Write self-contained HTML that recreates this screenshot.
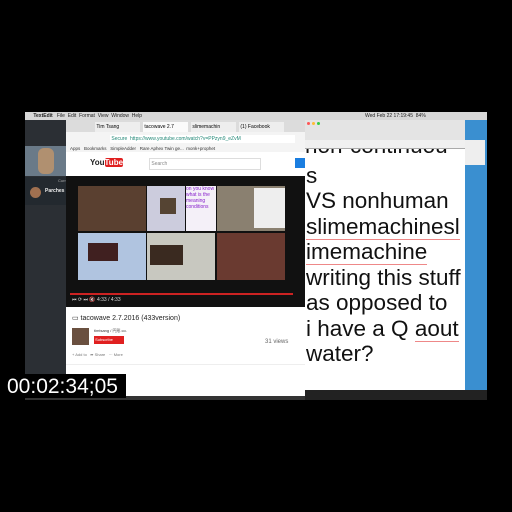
<!DOCTYPE html><html><head><style>
body{margin:0;width:512px;height:512px;background:#000;position:relative;overflow:hidden;font-family:"Liberation Sans",sans-serif}
div{position:absolute}
.t{font-size:22.5px;color:#111;left:306px;white-space:nowrap;line-height:26px}
.u{border-bottom:1px solid #e88}
</style></head><body>
<div style="left:25px;top:112px;width:462px;height:288px;background:#3a8fd0"></div>
<div style="left:25px;top:112px;width:462px;height:8px;background:#d8d8d8;font-size:5px;color:#222;line-height:8px">&nbsp;&nbsp;&nbsp;&nbsp;&nbsp;&nbsp;<b>TextEdit</b>&nbsp;&nbsp; File&nbsp; Edit&nbsp; Format&nbsp; View&nbsp; Window&nbsp; Help<span style="position:absolute;left:340px">Wed Feb 22 17:19:45 &nbsp;84%</span></div>
<div style="left:25px;top:120px;width:42px;height:280px;background:#2b2f34"></div>
<div style="left:25px;top:146px;width:42px;height:30px;background:#6a7a88"></div>
<div style="left:38px;top:148px;width:16px;height:26px;background:#b09070;border-radius:6px"></div>
<div style="left:25px;top:177px;width:93px;height:28px;background:#23292f"></div>
<div style="left:58px;top:178px;font-size:4px;color:#aaa">Current Call</div>
<div style="left:30px;top:187px;width:11px;height:11px;border-radius:50%;background:#a07050"></div>
<div style="left:45px;top:188px;font-size:5px;color:#eee"><b>Parches</b></div>
<div style="left:86px;top:187px;width:11px;height:11px;border-radius:50%;background:#2aa0e0"></div>
<div style="left:102px;top:187px;width:11px;height:11px;border-radius:50%;background:#e02828"></div>
<div style="left:66px;top:120px;width:240px;height:12px;background:#dcdcdc"></div>
<div style="left:95px;top:122px;width:45px;height:10px;background:#eee;font-size:5px;line-height:10px">&nbsp;Tim Tsang</div>
<div style="left:143px;top:122px;width:45px;height:10px;background:#fafafa;font-size:5px;line-height:10px">&nbsp;tacowave 2.7</div>
<div style="left:191px;top:122px;width:45px;height:10px;background:#eee;font-size:5px;line-height:10px">&nbsp;slimemachin</div>
<div style="left:239px;top:122px;width:45px;height:10px;background:#eee;font-size:5px;line-height:10px">&nbsp;(1) Facebook</div>
<div style="left:66px;top:132px;width:240px;height:20px;background:#f4f4f4"></div>
<div style="left:110px;top:135px;width:185px;height:8px;background:#fff;font-size:5px;color:#287;line-height:8px">&nbsp;Secure&nbsp; https://www.youtube.com/watch?v=PPzyn9_eZvM</div>
<div style="left:70px;top:146px;font-size:4.5px;color:#333">Apps &nbsp; Bookmarks &nbsp; SimpleAdder &nbsp; Rare Aphex Twin ge... &nbsp;monk+prophet</div>
<div style="left:66px;top:152px;width:240px;height:24px;background:#fff"></div>
<div style="left:90px;top:158px;font-size:8px;font-weight:bold;color:#222">You<span style="background:#e02020;color:#fff;border-radius:2px">Tube</span></div>
<div style="left:149px;top:158px;width:110px;height:10px;border:1px solid #ddd;font-size:5px;color:#888;line-height:10px">&nbsp;Search</div>
<div style="left:295px;top:158px;width:11px;height:10px;background:#1a7ee0"></div>
<div style="left:66px;top:176px;width:240px;height:131px;background:#111"></div>
<div style="left:78px;top:186px;width:68px;height:45px;background:#5a4030"></div>
<div style="left:147px;top:186px;width:38px;height:45px;background:#ccd"></div>
<div style="left:160px;top:198px;width:16px;height:16px;background:#543"></div>
<div style="left:186px;top:186px;width:30px;height:45px;background:#f4f0f8;font-size:5px;color:#82c;line-height:6px">on you know what is the meaning conditions</div>
<div style="left:217px;top:186px;width:68px;height:45px;background:#8a8070"></div>
<div style="left:254px;top:188px;width:31px;height:40px;background:#eee"></div>
<div style="left:78px;top:233px;width:68px;height:47px;background:#b0c4e0"></div>
<div style="left:88px;top:243px;width:30px;height:18px;background:#402020"></div>
<div style="left:147px;top:233px;width:68px;height:47px;background:#c8c8c0"></div>
<div style="left:150px;top:245px;width:33px;height:20px;background:#3a2a20"></div>
<div style="left:217px;top:233px;width:68px;height:47px;background:#6a3a30"></div>
<div style="left:70px;top:293px;width:223px;height:2px;background:#c22"></div>
<div style="left:72px;top:297px;font-size:5px;color:#ddd">⏮ ⟳ ⏭ 🔇 4:33 / 4:33</div>
<div style="left:66px;top:307px;width:240px;height:91px;background:#fff"></div>
<div style="left:72px;top:314px;font-size:7px;color:#222">▭ tacowave 2.7.2016 (433version)</div>
<div style="left:72px;top:328px;width:17px;height:17px;background:#6a5040"></div>
<div style="left:94px;top:328px;font-size:4px;color:#333">timtsang / 円形 co.</div>
<div style="left:94px;top:336px;width:30px;height:8px;background:#e02020;font-size:4px;color:#fff;line-height:8px">&nbsp;Subscribe</div>
<div style="left:265px;top:339px;font-size:6px;color:#666">31 views</div>
<div style="left:72px;top:352px;font-size:4px;color:#777">+ Add to &nbsp; ➦ Share &nbsp; ··· More</div>
<div style="left:66px;top:364px;width:240px;height:1px;background:#eee"></div>
<div style="left:72px;top:373px;font-size:4px;color:#444">Uploaded on Feb 7, 2016</div>
<div style="left:305px;top:120px;width:160px;height:270px;background:#fff"></div>
<div style="left:305px;top:120px;width:160px;height:20px;background:#e4e4e4"></div>
<div style="left:307px;top:122px;width:3px;height:3px;border-radius:50%;background:#f55"></div>
<div style="left:312px;top:122px;width:3px;height:3px;border-radius:50%;background:#fb3"></div>
<div style="left:317px;top:122px;width:3px;height:3px;border-radius:50%;background:#3c4"></div>
<div style="left:305px;top:140px;width:160px;height:8px;background:#f0f0f0;border-bottom:1px solid #aaa"></div>
<div style="left:305px;top:149px;width:160px;height:6px;overflow:hidden"><div class="t" style="left:0;top:-16px">non-continuou</div></div>
<div class="t" style="top:163px">s</div>
<div class="t" style="top:188px">VS nonhuman</div>
<div class="t" style="top:214px"><span class="u">slimemachinesl</span></div>
<div class="t" style="top:239px"><span class="u">imemachine</span></div>
<div class="t" style="top:265px">writing this stuff</div>
<div class="t" style="top:290px">as opposed to</div>
<div class="t" style="top:316px">i have a Q <span class="u">aout</span></div>
<div class="t" style="top:341px">water?</div>
<div style="left:465px;top:140px;width:20px;height:25px;background:#eee"></div>
<div style="left:305px;top:390px;width:182px;height:10px;background:#222"></div>
<div style="left:25px;top:396px;width:280px;height:4px;background:#333"></div>
<div style="left:6px;top:374px;width:120px;height:24px;background:#000"></div>
<div style="left:7px;top:375px;font-size:21px;color:#fff;line-height:24px">00:02:34;05</div>
</body></html>
